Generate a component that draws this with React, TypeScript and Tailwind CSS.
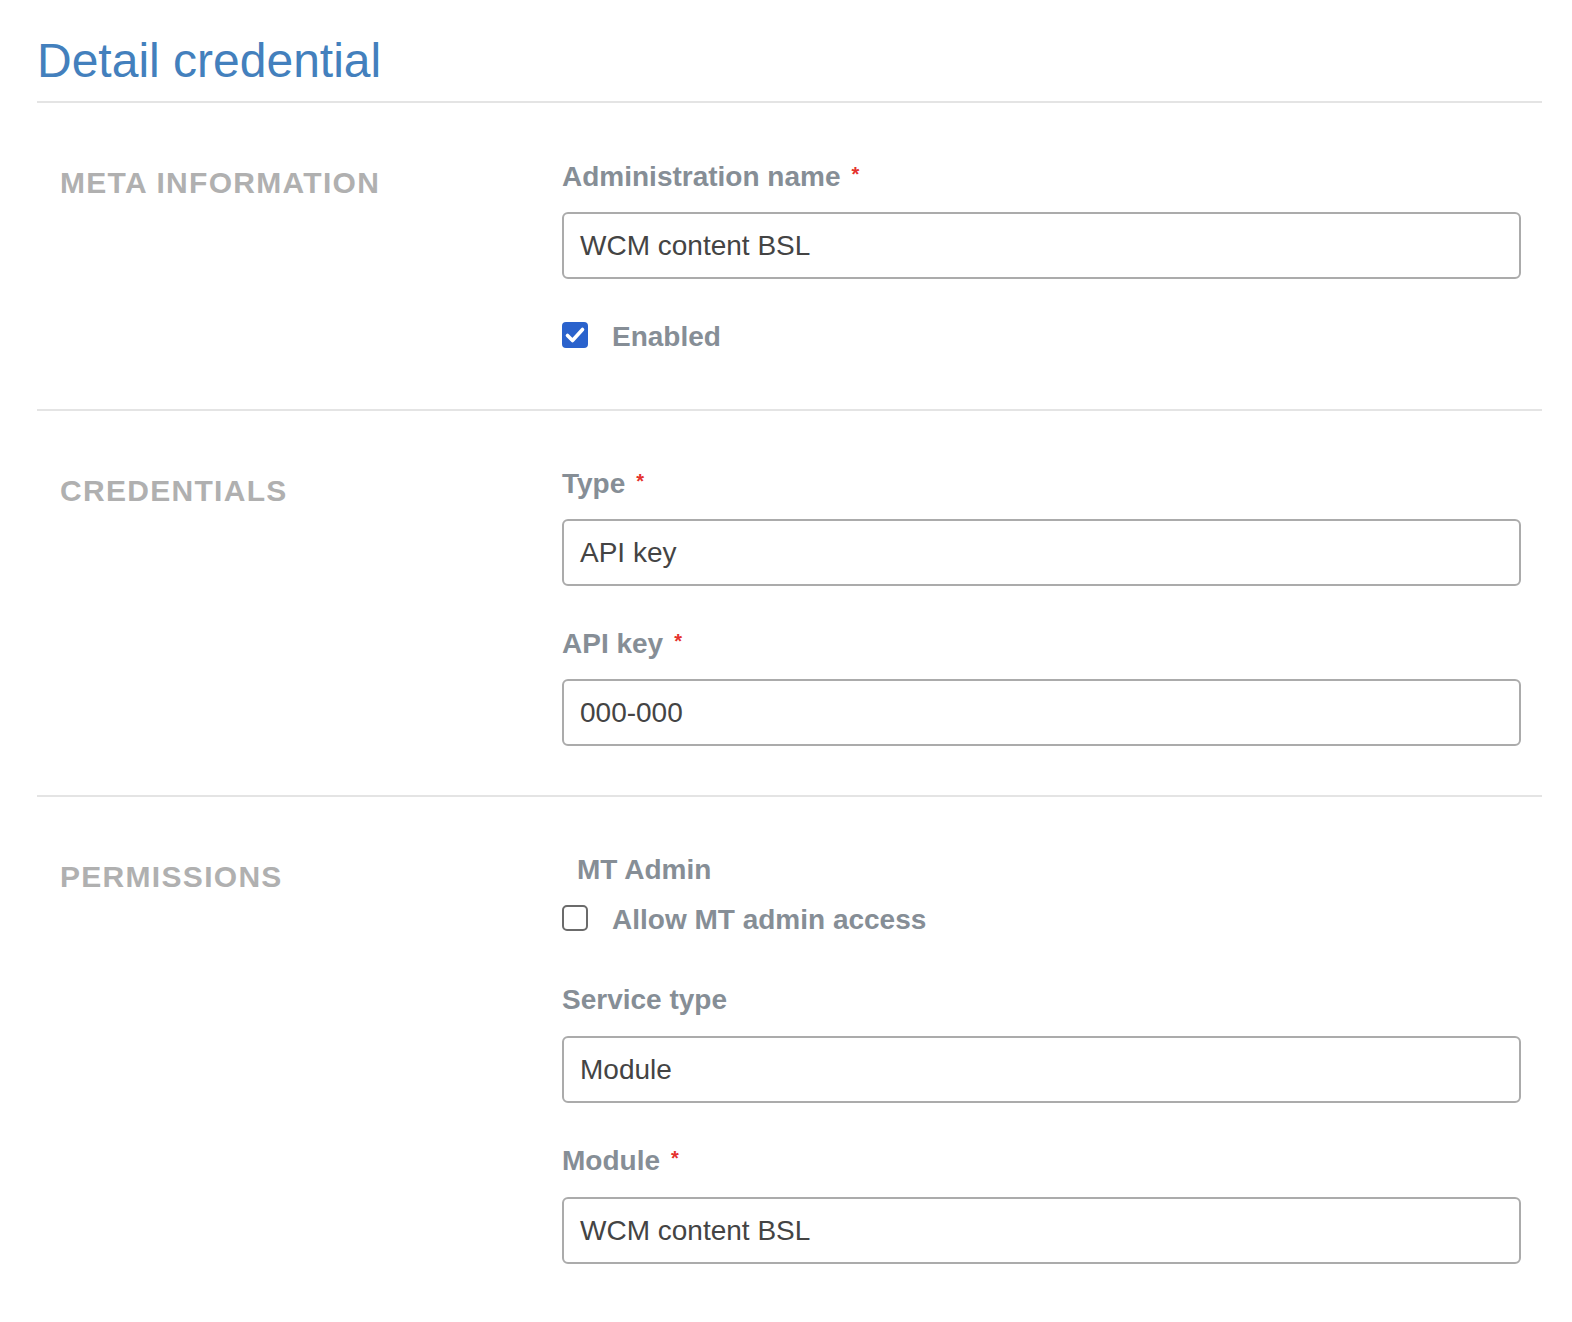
const font = { fontFamily: '"Liberation Sans", Arial, Helvetica, sans-serif' };

const Label = ({ text, required, indent }: { text: string; required?: boolean; indent?: boolean }) => (
  <div className={`flex items-start text-[28px] leading-[32px] font-bold text-[#868e96] ${indent ? 'pl-[15px]' : ''}`}>
    <span>{text}</span>
    {required && <span className="ml-[11px] text-[20px] leading-[20px] text-[#e5322d] relative top-[3px]">*</span>}
  </div>
);

const Field = ({ value }: { value: string }) => (
  <div className="h-[67px] w-full flex items-center border-2 border-[#ababab] rounded-[6px] px-[16px] text-[28px] leading-[32px] text-[#444444]">
    {value}
  </div>
);

const Box = ({ checked, label }: { checked: boolean; label: string }) => (
  <div className="flex items-start h-[32px]">
    {checked ? (
      <div className="mt-[1px] w-[26px] h-[26px] rounded-[4px] bg-[#2a62cc] flex items-center justify-center">
        <svg viewBox="0 0 26 26" className="w-[26px] h-[26px]">
          <path d="M5.5 13.5 L10.5 18.5 L20.5 7.5" fill="none" stroke="white" strokeWidth={3.6} strokeLinecap="round" strokeLinejoin="round" />
        </svg>
      </div>
    ) : (
      <div className="mt-[1px] w-[26px] h-[26px] rounded-[5px] border-2 border-[#6b6b6b] bg-white" />
    )}
    <span className="ml-[24px] text-[28px] leading-[32px] font-bold text-[#868e96]">{label}</span>
  </div>
);

const Section = ({ title, children, last, pb }: { title: string; children: React.ReactNode; last?: boolean; pb: string }) => (
  <div className={`flex pt-[57px] ${pb} ${last ? '' : 'border-b-2 border-[#e4e4e4]'}`}>
    <div className="w-[525px] shrink-0 pl-[23px]">
      <div className="mt-[7px] text-[30px] leading-[32px] font-bold tracking-[1.3px] text-[#b0b0b0] uppercase">{title}</div>
    </div>
    <div className="flex-1 pr-[21px]">{children}</div>
  </div>
);

export default function App() {
  return (
    <div className="min-h-screen bg-white pl-[37px] pr-[30px]" style={font}>
      <h1 className="pt-[33px] pb-[12px] text-[48px] leading-[56px] font-normal text-[#4380bd] border-b-2 border-[#e4e4e4]">
        Detail credential
      </h1>

      <Section title="Meta information" pb="pb-[56px]">
        <div className="mt-[1px]">
          <Label text="Administration name" required />
        </div>
        <div className="mt-[19px]">
          <Field value="WCM content BSL" />
        </div>
        <div className="mt-[42px]">
          <Box checked label="Enabled" />
        </div>
      </Section>

      <Section title="Credentials" pb="pb-[49px]">
        <Label text="Type" required />
        <div className="mt-[19px]">
          <Field value="API key" />
        </div>
        <div className="mt-[42px]">
          <Label text="API key" required />
        </div>
        <div className="mt-[19px]">
          <Field value="000-000" />
        </div>
      </Section>

      <Section title="Permissions" pb="pb-[58px]" last>
        <Label text="MT Admin" indent />
        <div className="mt-[18px]">
          <Box checked={false} label="Allow MT admin access" />
        </div>
        <div className="mt-[48px]">
          <Label text="Service type" />
        </div>
        <div className="mt-[20px]">
          <Field value="Module" />
        </div>
        <div className="mt-[42px]">
          <Label text="Module" required />
        </div>
        <div className="mt-[20px]">
          <Field value="WCM content BSL" />
        </div>
      </Section>
    </div>
  );
}
